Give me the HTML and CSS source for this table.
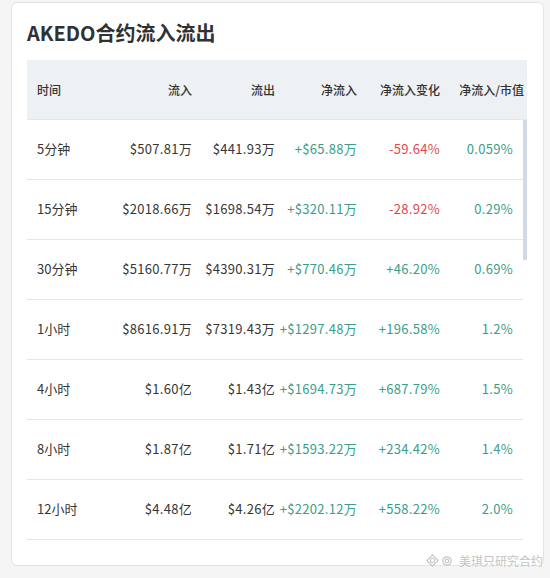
FILE: index.html
```html
<!DOCTYPE html>
<html lang="zh-CN">
<head>
  <meta charset="UTF-8" />
  <meta name="viewport" content="width=device-width, initial-scale=1.0"/>
  <title>AKEDO合约流入流出</title>
  <link rel="stylesheet" href="styles.css">
</head>
<body>

  <div class="card">
    <h2 class="titulo">AKEDO合约流入流出</h2>

    <div class="tabela">
      <div class="cabecalho">
        <div class="cel">时间</div>
        <div class="cel num">流入</div>
        <div class="cel num">流出</div>
        <div class="cel num">净流入</div>
        <div class="cel num">净流入变化</div>
        <div class="cel num">净流入/市值</div>
      </div>

      <div class="corpo">
        <div class="linhas">
          <div class="linha">
            <div class="cel">5分钟</div>
            <div class="cel num">$507.81万</div>
            <div class="cel num">$441.93万</div>
            <div class="cel num verde">+$65.88万</div>
            <div class="cel num vermelho">-59.64%</div>
            <div class="cel num verde">0.059%</div>
          </div>
          <div class="linha">
            <div class="cel">15分钟</div>
            <div class="cel num">$2018.66万</div>
            <div class="cel num">$1698.54万</div>
            <div class="cel num verde">+$320.11万</div>
            <div class="cel num vermelho">-28.92%</div>
            <div class="cel num verde">0.29%</div>
          </div>
          <div class="linha">
            <div class="cel">30分钟</div>
            <div class="cel num">$5160.77万</div>
            <div class="cel num">$4390.31万</div>
            <div class="cel num verde">+$770.46万</div>
            <div class="cel num verde">+46.20%</div>
            <div class="cel num verde">0.69%</div>
          </div>
          <div class="linha">
            <div class="cel">1小时</div>
            <div class="cel num">$8616.91万</div>
            <div class="cel num">$7319.43万</div>
            <div class="cel num verde">+$1297.48万</div>
            <div class="cel num verde">+196.58%</div>
            <div class="cel num verde">1.2%</div>
          </div>
          <div class="linha">
            <div class="cel">4小时</div>
            <div class="cel num">$1.60亿</div>
            <div class="cel num">$1.43亿</div>
            <div class="cel num verde">+$1694.73万</div>
            <div class="cel num verde">+687.79%</div>
            <div class="cel num verde">1.5%</div>
          </div>
          <div class="linha">
            <div class="cel">8小时</div>
            <div class="cel num">$1.87亿</div>
            <div class="cel num">$1.71亿</div>
            <div class="cel num verde">+$1593.22万</div>
            <div class="cel num verde">+234.42%</div>
            <div class="cel num verde">1.4%</div>
          </div>
          <div class="linha">
            <div class="cel">12小时</div>
            <div class="cel num">$4.48亿</div>
            <div class="cel num">$4.26亿</div>
            <div class="cel num verde">+$2202.12万</div>
            <div class="cel num verde">+558.22%</div>
            <div class="cel num verde">2.0%</div>
          </div>
        </div>
        <div class="rolagem"><div class="barra"></div></div>
      </div>
    </div>
  </div>

  <div class="marca">
    <svg width="13" height="13" viewBox="0 0 13 13" fill="none" stroke="#c6c6c6" stroke-width="1.1">
      <path d="M6.5 0.8 L12.2 6.5 L6.5 12.2 L0.8 6.5 Z"/>
      <circle cx="6.5" cy="6.5" r="2.2"/>
    </svg>
    <svg width="10" height="10" viewBox="0 0 10 10" fill="none" stroke="#c6c6c6" stroke-width="1.2">
      <circle cx="5" cy="5" r="4.2"/>
      <circle cx="5" cy="5" r="1.8"/>
    </svg>
    <span>美琪只研究合约</span>
  </div>

</body>
</html>
```

FILE: styles.css
```css
body {
  margin: 0;
  background: #f5f5f5;
  font-family: "Noto Sans CJK SC", "Noto Sans", sans-serif;
  color: #333;
  position: relative;
  height: 578px;
  overflow: hidden;
}

.card {
  margin: 2px 0 0 11px;
  width: 533px;
  box-sizing: border-box;
  background: #fff;
  border: 1px solid #e4e4e4;
  border-radius: 6px;
  padding: 16px 16px 25px 15px;
}

.titulo {
  margin: 0 0 13px;
  font-size: 20px;
  line-height: 28px;
  font-weight: bold;
  color: #2f3133;
}

.cabecalho,
.linha {
  display: grid;
  grid-template-columns: 83px 83px 83px 82px 83px 1fr;
  align-items: center;
}

.cabecalho {
  height: 60px;
  box-sizing: border-box;
  background: #edf1f4;
  border-bottom: 1px solid #e3e7eb;
  font-size: 12px;
  font-weight: 500;
  color: #333;
}

.cel {
  padding-left: 10px;
  white-space: nowrap;
}

.cel.num {
  text-align: right;
  padding-left: 0;
  padding-right: 1px;
  letter-spacing: 0.3px;
}

.cabecalho .cel.num {
  letter-spacing: 0;
}

.cabecalho .cel.num:last-child {
  padding-right: 3px;
}

.corpo {
  display: flex;
}

.linhas {
  width: 496px;
}

.linha {
  height: 60px;
  box-sizing: border-box;
  padding-bottom: 2px;
  border-bottom: 1px solid #e6e6e6;
  font-size: 13px;
  color: #363636;
}

.linha .cel.num:last-child {
  padding-right: 10px;
}

.verde {
  color: #3a9e89;
}

.vermelho {
  color: #e0484d;
}

.rolagem {
  width: 4px;
}

.barra {
  height: 140px;
  background: #d3d9e2;
}

.marca {
  position: absolute;
  right: 7px;
  top: 552px;
  display: flex;
  align-items: center;
  gap: 3px;
  font-size: 12px;
  color: #c4c4c4;
  text-shadow: 0 0 2px #fff;
}

.marca span {
  margin-left: 4px;
}
```
